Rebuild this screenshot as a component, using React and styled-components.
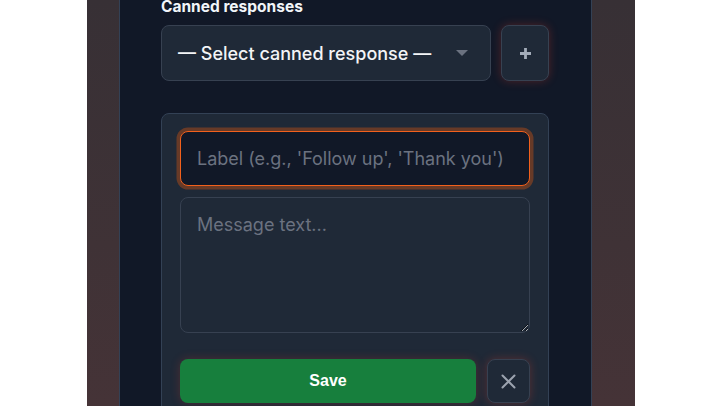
import React from "react";
import styled, { createGlobalStyle } from "styled-components";

const GlobalStyle = createGlobalStyle`
  html, body {
    margin: 0;
    padding: 0;
    background: #ffffff;
    overflow: hidden;
  }
  * { box-sizing: border-box; }
`;

const Page = styled.div`
  width: 722px;
  height: 406px;
  padding-left: 87px;
`;

const Backdrop = styled.div`
  width: 548px;
  height: 406px;
  background: linear-gradient(180deg, #373035 0%, #3f3236 60%, #453337 100%);
  padding-left: 32px;
`;

const Panel = styled.section`
  width: 473px;
  height: 100%;
  background: #111827;
  border-left: 1px solid #334155;
  border-right: 1px solid #334155;
  padding: 0 42px 0 41px;
  overflow: hidden;
  font-family: Inter, "Noto Sans", sans-serif;
`;

const Label = styled.div`
  margin-top: -3px;
  font-size: 15.5px;
  font-weight: 700;
  line-height: 20px;
  color: #f1f5f9;
  margin-bottom: 8px;
`;

const Row = styled.div`
  display: flex;
  gap: 10px;
  align-items: stretch;
`;

const SelectBox = styled.div`
  flex: 1;
  height: 56px;
  background: #1f2937;
  border: 1px solid #374151;
  border-radius: 8px;
  display: flex;
  align-items: center;
  padding: 0 16px;
  color: #f3f4f6;
  font-size: 18px;
  font-weight: 500;
`;

const Caret = styled.span`
  margin-left: auto;
  width: 0;
  height: 0;
  border-left: 6px solid transparent;
  border-right: 6px solid transparent;
  border-top: 6px solid #6b7280;
  margin-right: 6px;
`;

const IconButton = styled.button`
  width: ${(p) => p.$w}px;
  height: ${(p) => p.$h}px;
  flex: none;
  background: #1f2937;
  border: 1px solid #374151;
  border-radius: 8px;
  color: #9ca3af;
  display: flex;
  align-items: center;
  justify-content: center;
  padding: 0;
  box-shadow: 0 0 10px rgba(220, 60, 40, 0.3);
`;

const Card = styled.div`
  margin-top: 32px;
  background: #1f2937;
  border: 1px solid #334155;
  border-radius: 8px;
  padding: 17px 18px 18px 18px;
  display: flex;
  flex-direction: column;
`;

const TextInput = styled.input`
  height: 55px;
  width: 100%;
  background: #111827;
  border: 1.5px solid #f2601c;
  border-radius: 8px;
  box-shadow: 0 0 0 3.5px rgba(234, 88, 12, 0.36);
  padding: 0 16px;
  font-family: Inter, "Noto Sans", sans-serif;
  font-size: 18px;
  color: #f3f4f6;
  outline: none;
  &::placeholder { color: #6b7280; }
`;

const TextArea = styled.textarea`
  margin-top: 11px;
  height: 136px;
  width: 100%;
  background: #1f2937;
  border: 1px solid #374151;
  border-radius: 8px;
  padding: 16px 16px;
  font-family: Inter, "Noto Sans", sans-serif;
  font-size: 18px;
  color: #f3f4f6;
  outline: none;
  resize: vertical;
  &::placeholder { color: #6b7280; }
`;

const Actions = styled.div`
  margin-top: 26px;
  display: flex;
  gap: 11px;
`;

const SaveButton = styled.button`
  flex: 1;
  height: 44px;
  background: #177f3d;
  border: none;
  border-radius: 8px;
  color: #ffffff;
  font-family: "Liberation Sans", Arial, sans-serif;
  font-weight: 700;
  font-size: 16px;
  box-shadow: 0 0 10px rgba(220, 60, 40, 0.25);
`;

const Plus = () => (
  <svg width="13" height="13" viewBox="0 0 13 13">
    <path d="M6.5 1v11M1 6.5h11" stroke="#a3acb9" strokeWidth="2.8" />
  </svg>
);

const Cross = () => (
  <svg width="15" height="15" viewBox="0 0 15 15">
    <path d="M1.5 1.5l12 12M13.5 1.5l-12 12" stroke="#9ca3af" strokeWidth="2" strokeLinecap="round" />
  </svg>
);

export default function App() {
  return (
    <>
      <GlobalStyle />
      <Page>
        <Backdrop>
          <Panel>
            <Label>Canned responses</Label>
            <Row>
              <SelectBox>
                — Select canned response —
                <Caret />
              </SelectBox>
              <IconButton $w={48} $h={56}>
                <Plus />
              </IconButton>
            </Row>
            <Card>
              <TextInput placeholder="Label (e.g., 'Follow up', 'Thank you')" />
              <TextArea placeholder="Message text..." />
              <Actions>
                <SaveButton>Save</SaveButton>
                <IconButton $w={43} $h={44}>
                  <Cross />
                </IconButton>
              </Actions>
            </Card>
          </Panel>
        </Backdrop>
      </Page>
    </>
  );
}
